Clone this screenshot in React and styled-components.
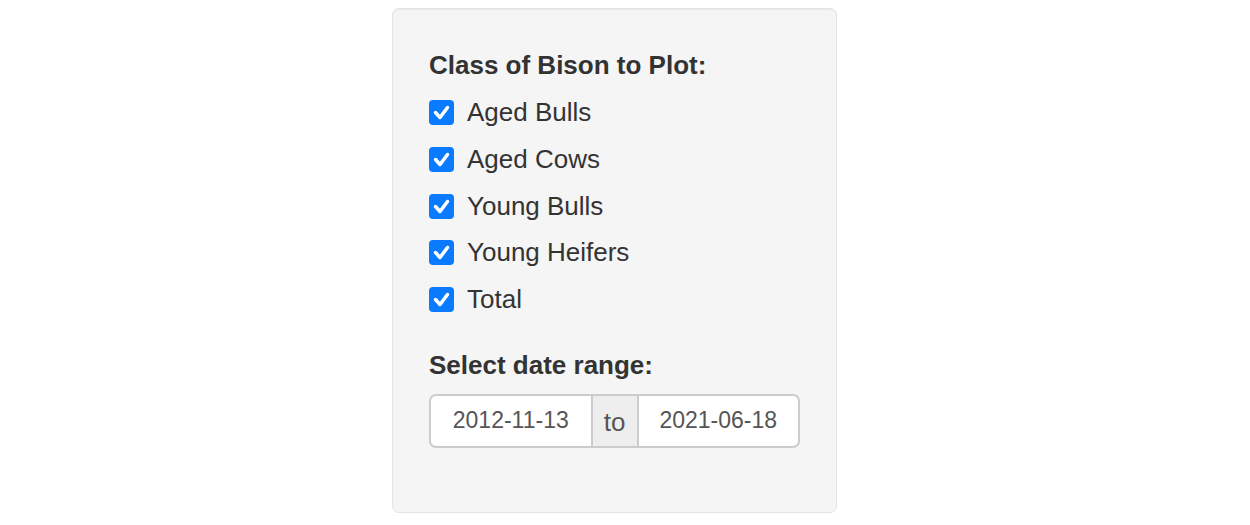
import React from 'react';
import styled, { createGlobalStyle } from 'styled-components';

const GlobalStyle = createGlobalStyle`
  body {
    margin: 0;
    background: #fff;
    font-family: "Liberation Sans", Arial, sans-serif;
    color: #333;
  }
`;

const Page = styled.div`
  padding: 8px 0 0 392px;
`;

const Well = styled.div`
  box-sizing: border-box;
  width: 445px;
  height: 505px;
  padding: 37px 36px 36px;
  background: #f5f5f5;
  border: 1px solid #e3e3e3;
  border-radius: 7px;
  box-shadow: inset 0 1px 1px rgba(0, 0, 0, 0.05);
`;

const Group = styled.div`
  margin-bottom: ${props => props.gap || 0}px;
`;

const Label = styled.div`
  font-size: 26px;
  font-weight: bold;
  line-height: 38px;
  margin-bottom: 9.5px;
`;

const Options = styled.div`
  display: flex;
  flex-direction: column;
  gap: 8.75px;
`;

const CheckRow = styled.label`
  display: flex;
  align-items: center;
  gap: 13px;
  height: 38px;
  font-size: 26px;
  cursor: pointer;
`;

const Box = styled.span`
  width: 25px;
  height: 25px;
  border-radius: 4px;
  background: #0a7aff;
  display: block;
  flex-shrink: 0;

  svg {
    display: block;
  }
`;

const InputGroup = styled.div`
  display: flex;
  width: 371px;
  height: 54px;
`;

const DateInput = styled.div`
  box-sizing: border-box;
  flex: 1;
  display: flex;
  align-items: center;
  justify-content: center;
  background: #fff;
  border: 2px solid #ccc;
  border-radius: ${props => (props.side === 'left' ? '7px 0 0 7px' : '0 7px 7px 0')};
  font-size: 23px;
  color: #555;
`;

const Addon = styled.div`
  box-sizing: border-box;
  width: 44px;
  display: flex;
  align-items: center;
  justify-content: center;
  background: #eee;
  border-top: 2px solid #ccc;
  border-bottom: 2px solid #ccc;
  font-size: 26px;
  color: #555;
  padding-top: 4px;
`;

const Check = () => (
  <svg width="25" height="25" viewBox="0 0 25 25">
    <polyline points="6.5,12.5 11,17.5 18.5,7.5" fill="none" stroke="#fff" strokeWidth="3.5" strokeLinecap="round" strokeLinejoin="round" />
  </svg>
);

const classes = ['Aged Bulls', 'Aged Cows', 'Young Bulls', 'Young Heifers', 'Total'];

export default function App() {
  return (
    <>
      <GlobalStyle />
      <Page>
        <Well>
          <Group gap={27.5}>
            <Label>Class of Bison to Plot:</Label>
            <Options>
              {classes.map(c => (
                <CheckRow key={c}>
                  <Box><Check /></Box>
                  {c}
                </CheckRow>
              ))}
            </Options>
          </Group>
          <Group>
            <Label>Select date range:</Label>
            <InputGroup>
              <DateInput side="left">2012-11-13</DateInput>
              <Addon>to</Addon>
              <DateInput side="right">2021-06-18</DateInput>
            </InputGroup>
          </Group>
        </Well>
      </Page>
    </>
  );
}
